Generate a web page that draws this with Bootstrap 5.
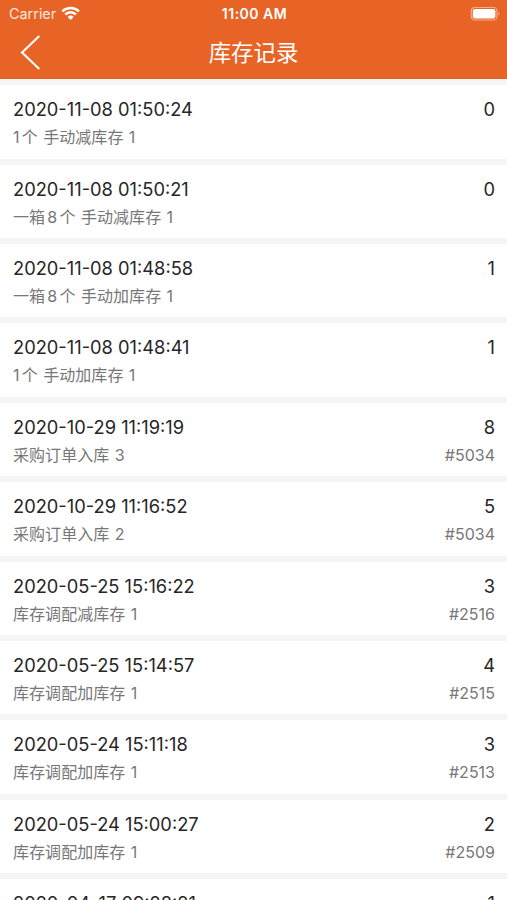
<!DOCTYPE html>
<html lang="zh-CN">
<head>
<meta charset="utf-8">
<meta name="viewport" content="width=device-width, initial-scale=1">
<title>库存记录</title>
<link href="https://cdn.jsdelivr.net/npm/bootstrap@5.3.0/dist/css/bootstrap.min.css" rel="stylesheet">
<style>
body{font-family:Inter,"Noto Sans CJK SC",sans-serif;background:#f5f5f5;height:900px;color:#262626}
.app-head{background:#e86426;height:79px}
.status-bar{height:27px;font-size:14px;line-height:27px;padding:0 7px 0 9px}
.carrier{font-size:14.4px;opacity:.85}
.clock{font-size:14px;font-weight:600;letter-spacing:.5px}
.title-bar{height:52px;padding-left:20px;padding-right:20px}
.page-title{font-size:22.4px;line-height:52px;font-weight:400}
.records{padding-top:6.2px;gap:6px}
.record{height:73.4px;padding:12px 12px 0 13px}
.line-main{font-size:18.3px;line-height:24px}
.line-sub{font-size:16px;line-height:24px;margin-top:4px;color:#777}
.note{letter-spacing:.06px;word-spacing:.8px}
.count{margin-right:2.2px}
.count-inner{margin-left:2.2px}
</style>
</head>
<body class="overflow-hidden">
<header class="app-head text-white">
  <div class="status-bar row g-0">
    <div class="col d-flex align-items-center"><span class="carrier">Carrier</span>
      <svg class="ms-1" width="21" height="16" viewBox="-.6 .9 21 16" fill="none" stroke="#fff" stroke-width="2.5"><path d="M1.7 6.2a12 12 0 0 1 16.6 0M4.7 9.4a7.6 7.6 0 0 1 10.6 0"/><path d="M7 11.9a4.3 4.3 0 0 1 6 0L10 15z" fill="#fff" stroke="none"/></svg>
    </div>
    <div class="col-auto clock">11:00 AM</div>
    <div class="col d-flex align-items-center justify-content-end">
      <svg width="30" height="14" viewBox="-.6 .2 30 14"><rect x=".6" y=".6" width="25.8" height="12.6" rx="3.8" fill="none" stroke="#f3ad8b" stroke-width="1.2"/><rect x="2.2" y="2.2" width="22.6" height="9.4" rx="2.2" fill="#fff"/><path d="M28 4.8q2 2.1 0 4.2z" fill="#f3ad8b"/></svg>
    </div>
  </div>
  <div class="title-bar row g-0 align-items-center">
    <div class="col d-flex"><svg width="22" height="36" viewBox="0 .6 22 36" fill="none" stroke="#fff" stroke-width="2.1"><path d="M19.3 1.5 2 18l17.3 16.5"/></svg></div>
    <h1 class="page-title col-auto m-0">库存记录</h1>
    <div class="col"></div>
  </div>
</header>
<main class="records d-flex flex-column" id="records"></main>
<script>
const records = [
  ["2020-11-08 01:50:24","0","1个 手动减库存 1",""],
  ["2020-11-08 01:50:21","0","一箱8个 手动减库存 1",""],
  ["2020-11-08 01:48:58","1","一箱8个 手动加库存 1",""],
  ["2020-11-08 01:48:41","1","1个 手动加库存 1",""],
  ["2020-10-29 11:19:19","8","采购订单入库 3","#5034"],
  ["2020-10-29 11:16:52","5","采购订单入库 2","#5034"],
  ["2020-05-25 15:16:22","3","库存调配减库存 1","#2516"],
  ["2020-05-25 15:14:57","4","库存调配加库存 1","#2515"],
  ["2020-05-24 15:11:18","3","库存调配加库存 1","#2513"],
  ["2020-05-24 15:00:27","2","库存调配加库存 1","#2509"],
  ["2020-04-17 09:28:21","1","",""]
];
const spaced = note => note.replace(/(\d)(?=个)/, (d, _, at) =>
  `<span class="count${at ? " count-inner" : ""}">${d}</span>`);
document.getElementById("records").innerHTML = records.map(([time, qty, note, ref]) => `
  <article class="record bg-white flex-shrink-0">
    <div class="line-main d-flex justify-content-between"><span>${time}</span><span>${qty}</span></div>
    <div class="line-sub d-flex justify-content-between"><span class="note">${spaced(note)}</span><span>${ref}</span></div>
  </article>`).join("");
</script>
<script src="https://cdn.jsdelivr.net/npm/bootstrap@5.3.0/dist/js/bootstrap.bundle.min.js"></script>
</body>
</html>
